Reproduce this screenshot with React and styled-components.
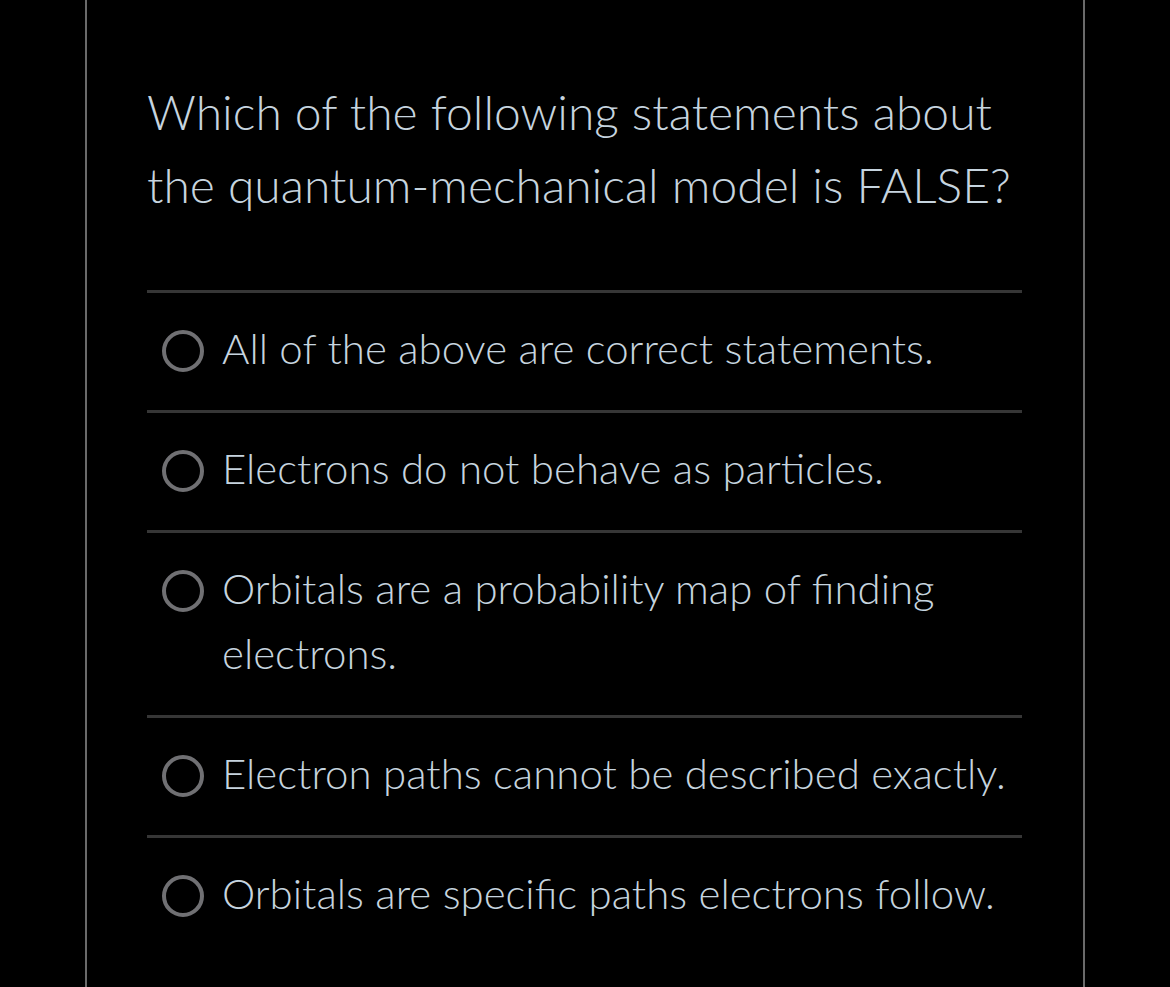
import React from 'react'
import styled, { createGlobalStyle } from 'styled-components'

const GlobalStyle = createGlobalStyle`
    html, body {
        margin: 0;
        padding: 0;
        background: #000000;
    }
    body {
        font-family: "Lato Light", Lato, "Noto Sans", sans-serif;
        font-weight: 300;
        color: #c6d4df;
    }
`

const Panel = styled.div`
    width: 1000px;
    min-height: 987px;
    margin: 0 auto;
    box-sizing: border-box;
    border-left: 2px solid #6a6a6a;
    border-right: 2px solid #6a6a6a;
    padding: 75px 61px 0 60px;
`

const Question = styled.div`
    font-size: 48px;
    line-height: 73px;
    margin-bottom: 69px;
`

const Options = styled.ul`
    list-style: none;
    margin: 0;
    padding: 0;
`

const Option = styled.li`
    display: flex;
    align-items: flex-start;
    gap: 18px;
    border-top: 3px solid #363636;
    padding: 23px 0 29px 15px;
`

const Radio = styled.span`
    flex: none;
    width: 34px;
    height: 34px;
    margin-top: 14px;
    border: 4px solid #707073;
    border-radius: 50%;
`

const Label = styled.span`
    font-size: 42px;
    line-height: 65px;
`

const answers = [
    'All of the above are correct statements.',
    'Electrons do not behave as particles.',
    'Orbitals are a probability map of finding electrons.',
    'Electron paths cannot be described exactly.',
    'Orbitals are specific paths electrons follow.',
]

function App() {
    return (
        <>
            <GlobalStyle />
            <Panel>
                <Question>
                    Which of the following statements about
                    <br />
                    the quantum-mechanical model is FALSE?
                </Question>
                <Options>
                    {answers.map((a) => (
                        <Option key={a}>
                            <Radio />
                            <Label>{a}</Label>
                        </Option>
                    ))}
                </Options>
            </Panel>
        </>
    )
}

export default App
